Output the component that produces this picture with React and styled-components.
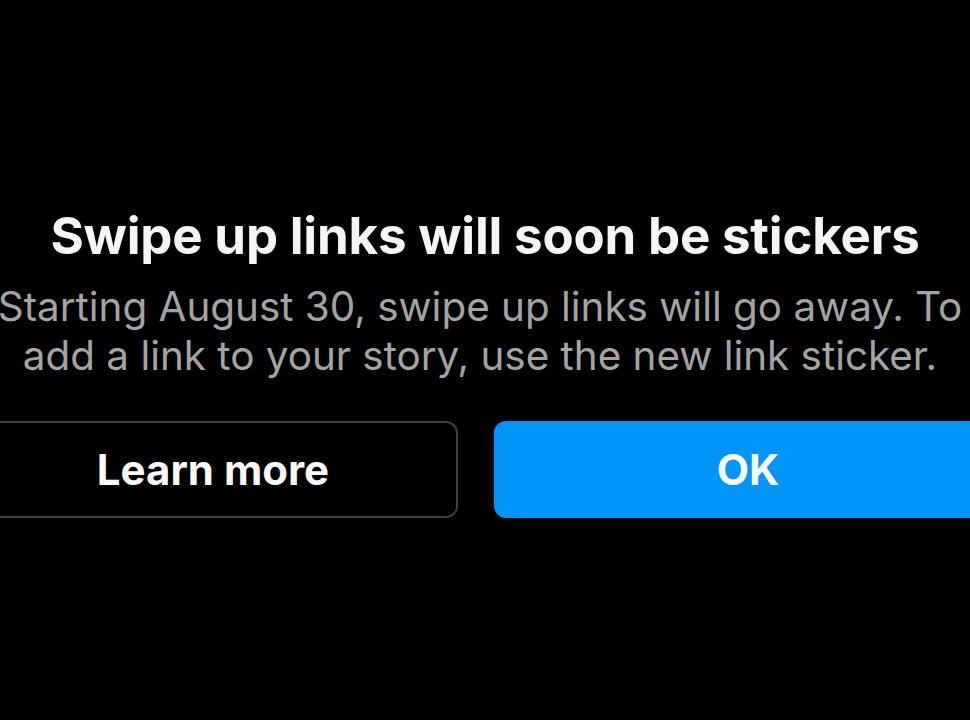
import React from "react";
import styled, { createGlobalStyle } from "styled-components";

const Global = createGlobalStyle`
  html, body { margin: 0; padding: 0; background: #000; }
  body { width: 970px; height: 720px; overflow: hidden; }
  #root { width: 970px; height: 720px; }
`;

const Screen = styled.div`
  width: 970px;
  height: 720px;
  background: #000;
  display: flex;
  flex-direction: column;
  align-items: center;
  padding-top: 206px;
  box-sizing: border-box;
  overflow: hidden;
  font-family: Inter, "Noto Sans", sans-serif;
`;

const Title = styled.h1`
  margin: 0;
  font-size: 51px;
  font-weight: 700;
  color: #f5f5f5;
  line-height: 60px;
  letter-spacing: -0.2px;
  white-space: nowrap;
  flex-shrink: 0;
`;

const Body = styled.p`
  margin: 16px 10px 0 0;
  font-size: 40.4px;
  font-weight: 400;
  color: #a4a4a4;
  line-height: 49px;
  text-align: center;
  white-space: nowrap;
  flex-shrink: 0;
`;

const Actions = styled.div`
  display: grid;
  grid-template-columns: 490px 508px;
  gap: 36px;
  margin-top: 41px;
  flex-shrink: 0;
`;

const Button = styled.button`
  height: 97px;
  border-radius: 12px;
  font-family: Inter, "Noto Sans", sans-serif;
  font-size: 42px;
  font-weight: 700;
  color: #fafafa;
  background: ${(p) => (p.$primary ? "#0095f6" : "#000")};
  border: 2px solid ${(p) => (p.$primary ? "#0095f6" : "#404040")};
  box-sizing: border-box;
  cursor: pointer;
`;

export default function App() {
  return (
    <>
      <Global />
      <Screen>
        <Title>Swipe up links will soon be stickers</Title>
        <Body>
          Starting August 30, swipe up links will go away. To
          <br />
          add a link to your story, use the new link sticker.
        </Body>
        <Actions>
          <Button>Learn more</Button>
          <Button $primary>OK</Button>
        </Actions>
      </Screen>
    </>
  );
}
